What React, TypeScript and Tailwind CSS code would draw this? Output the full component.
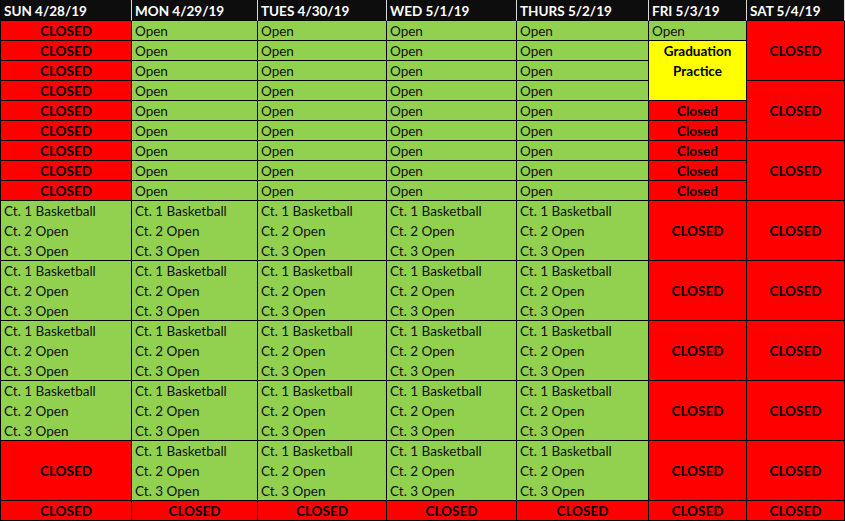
import React from 'react'

type Kind = 'open' | 'closed' | 'yellow' | 'head'

interface CellProps {
  kind: Kind
  span?: number
  children?: React.ReactNode
}

const kindClass: Record<Kind, string> = {
  head: 'bg-[#0d0d0d] text-white font-bold justify-start border-r-[#d9d9d9] pl-[3px]',
  open: 'bg-[#92d050] text-[#111] justify-start pl-[3px]',
  closed: 'bg-[#ff0000] text-black font-bold justify-center',
  yellow: 'bg-[#ffff00] text-black font-bold justify-center text-center',
}

const Cell: React.FC<CellProps> = ({ kind, span, children }) => {
  const spanClass =
    span === 3 ? 'row-span-3' : span === 5 ? 'row-span-5' : ''
  return (
    <div
      className={`flex items-center pt-[1px] border-r border-b border-black overflow-hidden whitespace-nowrap leading-[20px] ${kindClass[kind]} ${spanClass}`}
    >
      {children}
    </div>
  )
}

const Courts = () => (
  <div className="self-start -mt-[1px] flex flex-col">
    <span className="h-[20px]">Ct. 1 Basketball</span>
    <span className="h-[20px]">Ct. 2 Open</span>
    <span className="h-[20px]">Ct. 3 Open</span>
  </div>
)

const days = [
  'SUN 4/28/19',
  'MON 4/29/19',
  'TUES 4/30/19',
  'WED 5/1/19',
  'THURS 5/2/19',
  'FRI 5/3/19',
  'SAT 5/4/19',
]

const App: React.FC = () => {
  const cells: React.ReactNode[] = []
  let k = 0

  days.forEach((d) => cells.push(<Cell key={k++} kind="head">{d}</Cell>))

  for (let r = 0; r < 9; r++) {
    cells.push(<Cell key={k++} kind="closed">CLOSED</Cell>)
    for (let c = 0; c < 4; c++) {
      cells.push(<Cell key={k++} kind="open">Open</Cell>)
    }
    if (r === 0) {
      cells.push(<Cell key={k++} kind="open">Open</Cell>)
    } else if (r === 1) {
      cells.push(
        <Cell key={k++} kind="yellow" span={3}>
          <div className="self-start -mt-[1px] flex flex-col items-center">
            <span className="h-[20px]">Graduation</span>
            <span className="h-[20px]">Practice</span>
          </div>
        </Cell>
      )
    } else if (r >= 4) {
      cells.push(<Cell key={k++} kind="closed">Closed</Cell>)
    }
    if (r % 3 === 0) {
      cells.push(<Cell key={k++} kind="closed" span={3}>CLOSED</Cell>)
    }
  }

  for (let g = 0; g < 5; g++) {
    if (g === 4) {
      cells.push(<Cell key={k++} kind="closed">CLOSED</Cell>)
    } else {
      cells.push(<Cell key={k++} kind="open"><Courts /></Cell>)
    }
    for (let c = 0; c < 4; c++) {
      cells.push(<Cell key={k++} kind="open"><Courts /></Cell>)
    }
    cells.push(<Cell key={k++} kind="closed">CLOSED</Cell>)
    cells.push(<Cell key={k++} kind="closed">CLOSED</Cell>)
  }

  for (let c = 0; c < 7; c++) {
    cells.push(<Cell key={k++} kind="closed">CLOSED</Cell>)
  }

  return (
    <div className="w-[845px] h-[521px] bg-white font-['Lato','Open_Sans',sans-serif] text-[13.5px]">
      <div className="grid grid-cols-[131px_126px_129px_130px_132px_98px_98px] grid-rows-[21px_repeat(9,20px)_repeat(5,60px)_20px] border-l border-black">
        {cells}
      </div>
    </div>
  )
}

export default App
